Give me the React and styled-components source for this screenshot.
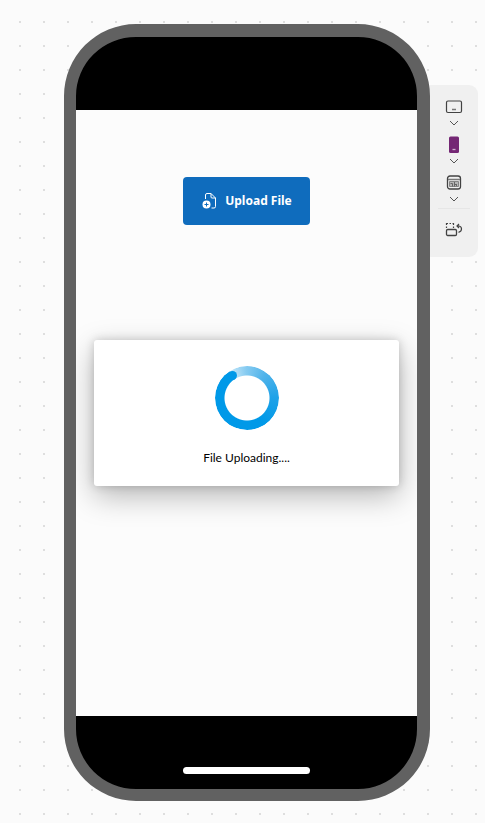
import React from "react";
import styled, { createGlobalStyle } from "styled-components";

const GlobalStyle = createGlobalStyle`
  *, *::before, *::after { box-sizing: border-box; }
  body { margin: 0; background: #fbfbfb; font-family: "Noto Sans", sans-serif; }
  svg { display: block; }
`;

const Canvas = styled.main`
  display: flex;
  align-items: stretch;
  min-height: 100vh;
  padding: 24px 7px 22px 64px;
  background-color: #fbfbfb;
  background-image: conic-gradient(from 90deg at 22px 22px, #dedede 90deg, transparent 0);
  background-size: 24px 24px;
  background-position: -3px -1px;
`;

const Phone = styled.section`
  position: relative;
  z-index: 1;
  flex: 1;
  min-width: 0;
  display: flex;
  flex-direction: column;
  overflow: hidden;
  border: solid #616161;
  border-width: 13px 13px 12px 12px;
  border-radius: 72px;
  background: #000;
`;

const StatusArea = styled.div`
  height: 73px;
`;

const Screen = styled.div`
  flex: 1;
  display: flex;
  flex-direction: column;
  align-items: center;
  padding: 67px 18px 0;
  overflow: hidden;
  background: #fcfcfc;
`;

const HomeArea = styled.div`
  display: flex;
  justify-content: center;
  align-items: flex-end;
  height: 73px;
  padding-bottom: 15px;
`;

const HomeBar = styled.div`
  width: 127px;
  height: 7px;
  border-radius: 4px;
  background: #fff;
`;

const PlainButton = styled.button`
  margin: 0;
  padding: 0;
  border: 0;
  background: none;
  color: inherit;
  cursor: pointer;
`;

const UploadButton = styled(PlainButton)`
  display: flex;
  align-items: center;
  justify-content: center;
  gap: 8px;
  width: 127px;
  height: 48px;
  border-radius: 4px;
  background: #0f6cbd;
  color: #fff;
  font: 700 12px/16px "Noto Sans", sans-serif;
`;

const Dialog = styled.div`
  display: flex;
  flex-direction: column;
  align-items: center;
  gap: 19px;
  width: 100%;
  margin-top: 115px;
  padding: 26px 16px 19px;
  border-radius: 3px;
  background: #fff;
  box-shadow: 0 10px 30px rgba(0, 0, 0, 0.28), 0 0 10px rgba(0, 0, 0, 0.18);
`;

const Message = styled.p`
  margin: 0;
  color: #000;
  font: 12px/18px Lato, sans-serif;
`;

const Ring = styled.div`
  position: relative;
  width: 64px;
  height: 64px;
  &::before {
    content: "";
    position: absolute;
    inset: 0;
    border-radius: 50%;
    background: conic-gradient(from -32deg, #c3e6f8, #86cbf1 30deg, #4fb3ea 70deg, #1fa2e8 120deg, #0099e8 180deg);
    mask: radial-gradient(circle, transparent 22px, #000 23px);
  }
  &::after {
    content: "";
    position: absolute;
    top: 5px;
    left: 13px;
    width: 9px;
    height: 9px;
    border-radius: 50%;
    background: #0099e8;
  }
`;

const Toolbar = styled.aside`
  align-self: flex-start;
  display: flex;
  flex-direction: column;
  align-items: center;
  flex: 0 0 56px;
  margin: 61px 0 0 -8px;
  padding: 12px 0 17px 8px;
  border-radius: 9px;
  background: #f0f0f0;
  color: #424242;
`;

const ToolGroup = styled.div`
  display: flex;
  flex-direction: column;
  align-items: center;
  height: 38px;
`;

const ToolButton = styled(PlainButton)`
  display: grid;
  place-items: center;
  width: 32px;
  height: 20px;
`;

const MenuButton = styled(ToolButton)`
  height: 12px;
`;

const Divider = styled.hr`
  width: 32px;
  height: 1px;
  margin: -3px 0 11px;
  border: 0;
  background: #e6e6e6;
`;

const iconProps = { width: 18, height: 18, viewBox: "0 0 18 18", fill: "none", stroke: "currentColor", "aria-hidden": true };

const TabletIcon = () => (
  <svg {...iconProps}>
    <rect x="1.5" y="3" width="15" height="11.5" rx="1.5" strokeWidth="1.2" />
    <path d="M7 11.5h4" stroke="#777" strokeWidth="1.5" />
  </svg>
);

const PhoneIcon = () => (
  <svg {...iconProps}>
    <rect x="4" y="0.5" width="10" height="16.5" rx="1.5" fill="#742774" stroke="none" />
    <path d="M7.5 13.5h3" stroke="#ceb2ce" strokeWidth="1.3" />
  </svg>
);

const CustomIcon = () => (
  <svg {...iconProps}>
    <rect x="2.5" y="2" width="13" height="13" rx="2.5" strokeWidth="1.3" />
    <path d="M3 5.5h12" stroke="#777" strokeWidth="1.5" />
    <path d="M4.500 7.500h9v5h-9z" fill="#b5b5b5" stroke="#858585" />
    <path d="M5.500 9.500h2v3M9.500 8v4.500M9.500 10.500h2M11.500 12v-2" stroke="#666" />
  </svg>
);

const RotateIcon = () => (
  <svg {...iconProps}>
    <rect x="1.5" y="8.5" width="10" height="6" rx="1.2" strokeWidth="1.3" />
    <path d="M1.5 7V5.5M1.5 4V2.5H3M4.5 2.5H6M7.5 2.5h1V4M8.5 5.5V7" strokeWidth="1.2" />
    <path d="M12 5h2a3 3 0 0 1 2.500 3c0 1.800-1 2.800-3 3.300M14 3l-2 2 2 2" strokeWidth="1.2" />
  </svg>
);

const Chevron = () => (
  <svg width="10" height="6" viewBox="0 0 10 6" fill="none" stroke="#555" aria-hidden="true">
    <path d="M1 1l4 4 4-4" />
  </svg>
);

const DocumentAddIcon = () => (
  <svg width="16" height="16" viewBox="0 0 16 16" fill="none" aria-hidden="true">
    <path d="M4.500 6V2A1.500 1.500 0 0 1 6 .5h4L14.500 5v8.500A1.500 1.500 0 0 1 13 15h-2.500M10 .5V4A1 1 0 0 0 11 5h3.500" stroke="currentColor" />
    <circle cx="5.500" cy="11.500" r="4" fill="currentColor" />
    <path d="M5.500 9.500v4M3.500 11.500h4" stroke="#0f6cbd" />
  </svg>
);

const devices = [
  { name: "Tablet", Icon: TabletIcon },
  { name: "Phone", Icon: PhoneIcon },
  { name: "Custom size", Icon: CustomIcon },
];

export default function App() {
  return (
    <>
      <GlobalStyle />
      <Canvas>
        <Phone>
          <StatusArea />
          <Screen>
            <UploadButton type="button">
              <DocumentAddIcon />
              Upload File
            </UploadButton>
            <Dialog role="status">
              <Ring />
              <Message>File Uploading....</Message>
            </Dialog>
          </Screen>
          <HomeArea>
            <HomeBar />
          </HomeArea>
        </Phone>
        <Toolbar>
          {devices.map(({ name, Icon }) => (
            <ToolGroup key={name}>
              <ToolButton type="button" aria-label={name}>
                <Icon />
              </ToolButton>
              <MenuButton type="button" aria-label={`${name} options`}>
                <Chevron />
              </MenuButton>
            </ToolGroup>
          ))}
          <Divider />
          <ToolButton type="button" aria-label="Rotate">
            <RotateIcon />
          </ToolButton>
        </Toolbar>
      </Canvas>
    </>
  );
}
